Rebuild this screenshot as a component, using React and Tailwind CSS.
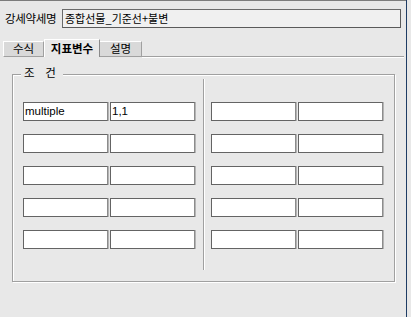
import React from "react";

const ko = { fontFamily: '"Noto Sans CJK KR", "Noto Sans", sans-serif' };
const lat = { fontFamily: '"Liberation Sans", Arial, sans-serif' };

function Box({ value }) {
  return (
    <div
      className="h-[19px] w-[85px] bg-white border border-[#646464] border-r-[#8c8c8c] shadow-[1px_0_0_#b4b4b4] flex items-center pl-[1px] text-[11.5px] text-black leading-none"
      style={lat}
    >
      {value}
    </div>
  );
}

function Col({ rows }) {
  return (
    <div className="flex flex-col gap-[13px]">
      {rows.map((r, i) => (
        <div key={i} className="flex gap-[2px]">
          <Box value={r[0]} />
          <Box value={r[1]} />
        </div>
      ))}
    </div>
  );
}

export default function App() {
  const left = [["multiple", "1,1"], ["", ""], ["", ""], ["", ""], ["", ""]];
  const right = [["", ""], ["", ""], ["", ""], ["", ""], ["", ""]];
  return (
    <div className="w-[411px] h-[317px] bg-[#e8e8e8] flex overflow-hidden">
      <div className="w-[406px] h-full border-t border-[#7c7c7c] flex flex-col">
        {/* name row */}
        <div className="flex items-center mt-[8px] pl-[5px] h-[19px]">
          <div className="w-[57px] text-[11.5px] text-black leading-none tracking-[-0.3px]" style={ko}>
            강세약세명
          </div>
          <div
            className="w-[339px] h-[19px] bg-[#f0f0f0] border border-[#6a6a6a] border-r-[#5a5a5a] border-b-[#5a5a5a] flex items-center pl-[2px] text-[11px] leading-none text-black"
            style={ko}
          >
            종합선물_기준선+불변
          </div>
        </div>

        {/* tabs */}
        <div className="flex items-end mt-[11px] pl-[3px] pr-[2px] h-[18px]">
          <div
            className="w-[41px] h-[16px] bg-[#d9d9d9] border-t border-l border-white border-r border-r-[#a0a0a0] border-b border-b-[#a0a0a0] flex items-center justify-center text-[11.5px] leading-none text-black"
            style={ko}
          >
            수식
          </div>
          <div
            className="w-[56px] h-[18px] bg-[#e8e8e8] border-t border-l border-white border-r border-r-[#8a8a8a] flex items-center justify-center text-[11.5px] font-bold leading-none text-black"
            style={ko}
          >
            지표변수
          </div>
          <div
            className="w-[42px] h-[16px] bg-[#d9d9d9] border-t border-white border-r border-r-[#a0a0a0] border-b border-b-[#a0a0a0] flex items-center justify-center text-[11.5px] leading-none text-black"
            style={ko}
          >
            설명
          </div>
          <div className="flex-1 border-b border-[#a0a0a0] shadow-[0_1px_0_#ffffff]" />
        </div>

        {/* group box */}
        <div className="relative mt-[17px] ml-[12px] w-[383px] h-[208px] border border-[#a0a0a0] shadow-[inset_1px_1px_0_#ffffff,1px_1px_0_#ffffff]">
          <div
            className="absolute left-[8px] top-[-8px] bg-[#e8e8e8] px-[3px] text-[11.5px] leading-none text-black tracking-[4px]"
            style={ko}
          >
            조 건
          </div>
          <div className="flex pt-[4px] pl-[10px]">
            <div className="pt-[23px]">
              <Col rows={left} />
            </div>
            <div className="ml-[8px] w-[2px] h-[191px] border-l border-[#a0a0a0] border-r border-r-white" />
            <div className="pt-[23px] ml-[6px]">
              <Col rows={right} />
            </div>
          </div>
        </div>
      </div>
      <div className="w-[1px] h-full bg-[#1e3c64]" />
    </div>
  );
}
